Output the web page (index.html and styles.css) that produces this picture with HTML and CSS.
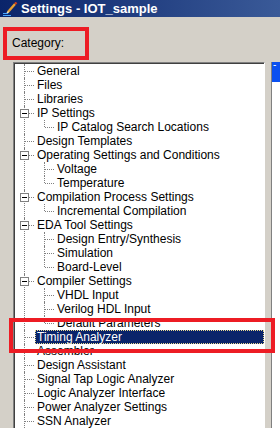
FILE: index.html
```html
<!DOCTYPE html>
<html lang="en">

<head>
    <meta charset="UTF-8">
    <meta name="viewport" content="width=device-width, initial-scale=1.0">
    <title>Settings - IOT_sample</title>
    <link rel="stylesheet" href="styles.css">
</head>

<body>
    <div class="titlebar">
        <svg class="app-icon" width="16" height="14" viewBox="0 0 16 14">
            <path d="M6 10 L13 2" stroke="#e8a030" stroke-width="2.4" />
            <path d="M13 2 L14.5 0.5" stroke="#d04020" stroke-width="2.4" />
            <path d="M5 11.5 L6.5 9.5" stroke="#f4e0b0" stroke-width="1.5" />
            <path d="M1 11.5 H6 M1 13.5 H9" stroke="#4aa8ff" stroke-width="1.2" />
        </svg>
        <span class="title">Settings - IOT_sample</span>
    </div>

    <div class="category">Category:</div>

    <div class="panels">
        <div class="tree-box">
            <ul class="tree">
                <li><span class="label">General</span></li>
                <li><span class="label">Files</span></li>
                <li><span class="label">Libraries</span></li>
                <li class="open"><span class="toggle"></span><span class="label">IP Settings</span>
                    <ul>
                        <li><span class="label">IP Catalog Search Locations</span></li>
                    </ul>
                </li>
                <li><span class="label">Design Templates</span></li>
                <li class="open"><span class="toggle"></span><span class="label">Operating Settings and Conditions</span>
                    <ul>
                        <li><span class="label">Voltage</span></li>
                        <li><span class="label">Temperature</span></li>
                    </ul>
                </li>
                <li class="open"><span class="toggle"></span><span class="label">Compilation Process Settings</span>
                    <ul>
                        <li><span class="label">Incremental Compilation</span></li>
                    </ul>
                </li>
                <li class="open"><span class="toggle"></span><span class="label">EDA Tool Settings</span>
                    <ul>
                        <li><span class="label">Design Entry/Synthesis</span></li>
                        <li><span class="label">Simulation</span></li>
                        <li><span class="label">Board-Level</span></li>
                    </ul>
                </li>
                <li class="open"><span class="toggle"></span><span class="label">Compiler Settings</span>
                    <ul>
                        <li><span class="label">VHDL Input</span></li>
                        <li><span class="label">Verilog HDL Input</span></li>
                        <li><span class="label">Default Parameters</span></li>
                    </ul>
                </li>
                <li><span class="label selected">Timing Analyzer</span></li>
                <li><span class="label">Assembler</span></li>
                <li><span class="label">Design Assistant</span></li>
                <li><span class="label">Signal Tap Logic Analyzer</span></li>
                <li><span class="label">Logic Analyzer Interface</span></li>
                <li><span class="label">Power Analyzer Settings</span></li>
                <li><span class="label">SSN Analyzer</span></li>
            </ul>
        </div>
        <div class="side-panel">
            <div class="side-head">-</div>
        </div>
    </div>

    <!-- annotations -->
    <div class="mark mark-category"></div>
    <div class="mark mark-timing"></div>
</body>

</html>
```

FILE: styles.css
```css
body {
    margin: 0;
    width: 280px;
    height: 428px;
    overflow: hidden;
    background-color: #d4d0c8;
    font-family: "Liberation Sans", Arial, sans-serif;
    font-size: 12px;
    color: #000;
    position: relative;
}

.titlebar {
    height: 17px;
    display: flex;
    align-items: center;
    padding-left: 2px;
    background: linear-gradient(to right, #0a246a, #3a5a98);
}

.app-icon {
    margin-right: 3px;
}

.title {
    color: #fff;
    font-weight: bold;
    font-size: 13px;
}

.category {
    margin: 19px 0 0 12px;
    height: 14px;
    line-height: 14px;
}

.panels {
    display: flex;
    margin-top: 12px;
    padding-left: 13px;
    gap: 6px;
    height: 400px;
}

.tree-box {
    width: 249px;
    background: #fff;
    border-top: 1px solid #808080;
    border-left: 1px solid #808080;
    border-right: 1px solid #fff;
    border-bottom: 1px solid #fff;
    box-shadow: inset 1px 1px 0 #404040;
    padding: 1px 0 0 1px;
}

.tree,
.tree ul {
    list-style: none;
    margin: 0;
    padding: 0;
}

.tree li {
    position: relative;
    padding-left: 21px;
}

.tree li::before {
    content: "";
    position: absolute;
    left: 9px;
    top: 0;
    bottom: 0;
    border-left: 1px dotted #808080;
}

.tree li::after {
    content: "";
    position: absolute;
    left: 10px;
    top: 7px;
    width: 9px;
    border-top: 1px dotted #808080;
}

.tree ul li {
    padding-left: 20px;
}

.tree ul li::before {
    left: 8px;
}

.tree ul li::after {
    left: 9px;
}

.tree ul li:last-child::before {
    bottom: auto;
    height: 7px;
}

.toggle {
    position: absolute;
    left: 5px;
    top: 3px;
    width: 7px;
    height: 7px;
    border: 1px solid #808080;
    background: #fff;
    z-index: 1;
}

.toggle::after {
    content: "";
    position: absolute;
    left: 1px;
    top: 3px;
    width: 5px;
    height: 1px;
    background: #000;
}

.label {
    display: inline-block;
    height: 14px;
    line-height: 14px;
    padding: 0 2px 0 1px;
    white-space: nowrap;
}

.label.selected {
    display: block;
    margin-left: -1px;
    padding-left: 2px;
    background: #0a246a;
    color: #fff;
    outline: 1px dotted #e8d890;
    outline-offset: -1px;
}

.side-panel {
    flex: 1;
    background: #fff;
    border-left: 1px solid #808080;
}

.side-head {
    height: 20px;
    background: #0b50f0;
    color: #fff;
    font-size: 10px;
    line-height: 6px;
    padding-left: 1px;
}

.mark {
    position: absolute;
    border: 4px solid #ed1c24;
}

.mark-category {
    left: 3px;
    top: 27px;
    width: 78px;
    height: 25px;
}

.mark-timing {
    left: 9px;
    top: 318px;
    width: 258px;
    height: 27px;
}
```
